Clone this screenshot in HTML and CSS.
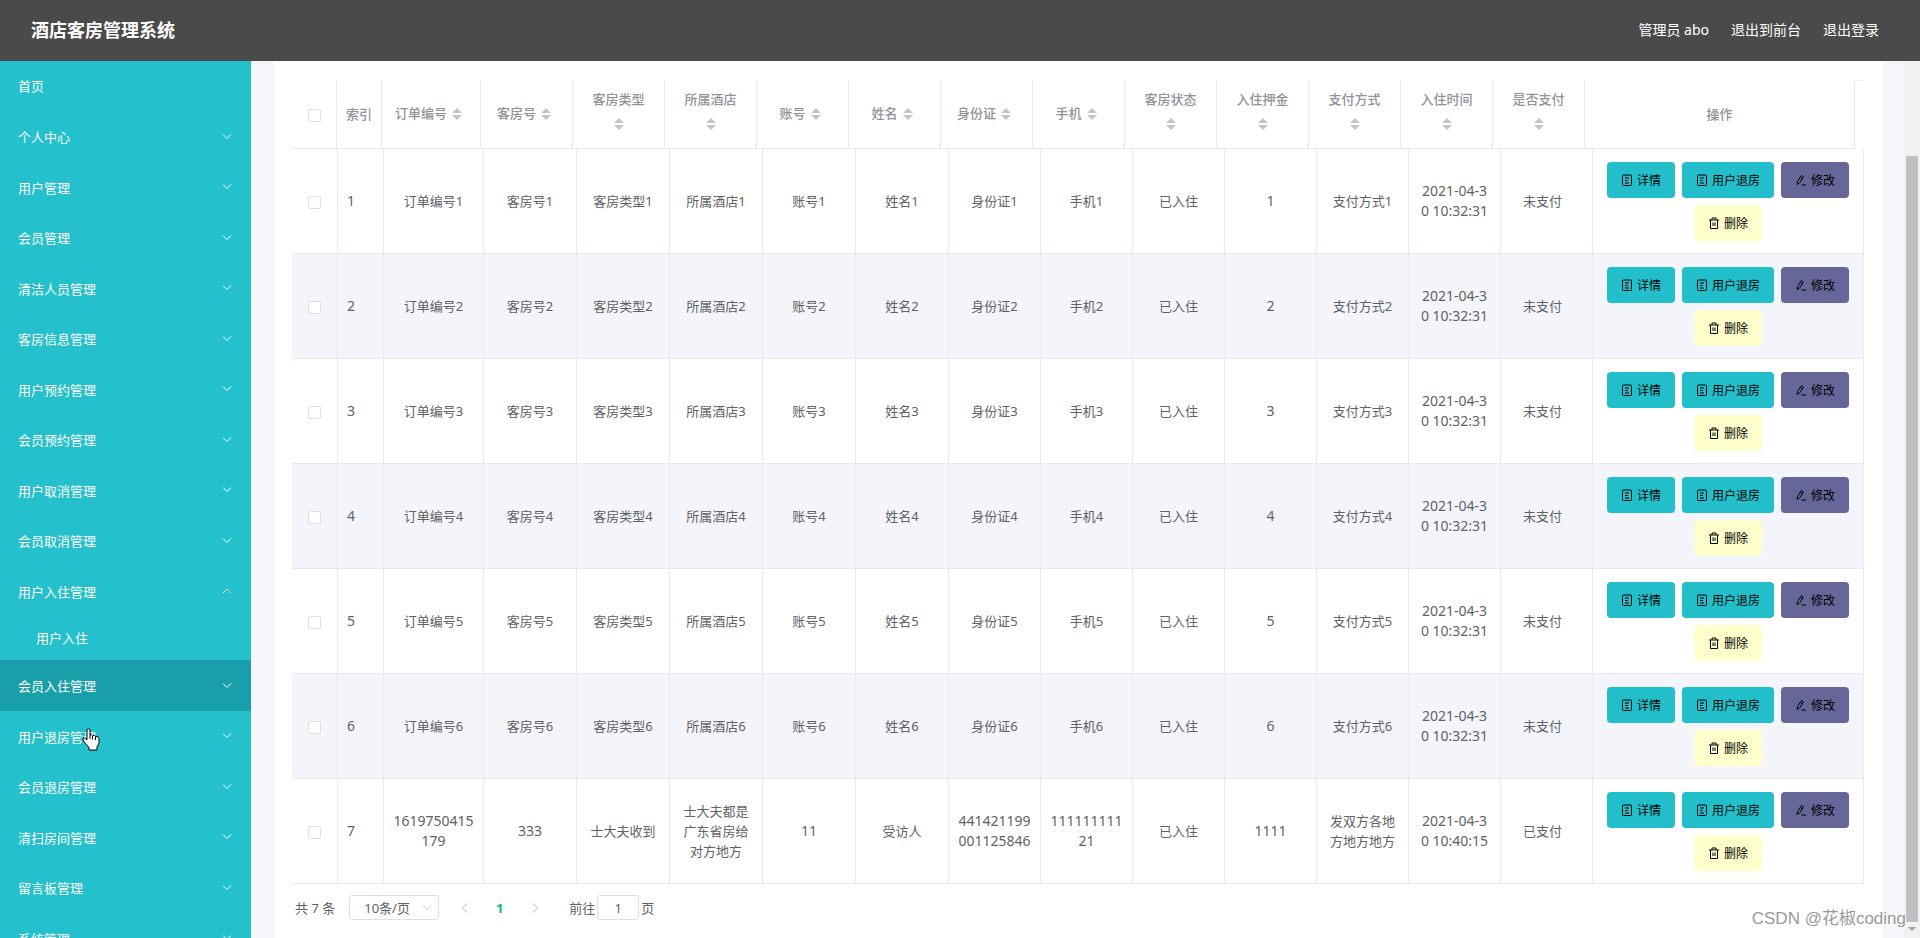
FILE: index.html
```html
<!DOCTYPE html>
<html lang="zh-CN">
<head>
  <meta charset="UTF-8">
  <meta name="viewport" content="width=device-width, initial-scale=1.0">
  <title>酒店客房管理系统</title>
  <link rel="stylesheet" href="styles.css">
</head>
<body>
  <!-- Icon symbols -->
  <svg class="symbols" aria-hidden="true">
    <symbol id="icon-down" viewBox="0 0 12 12"><path d="M2 3.5 L6 7.5 L10 3.5" /></symbol>
    <symbol id="icon-up" viewBox="0 0 12 12"><path d="M2 8 L6 4 L10 8" /></symbol>
    <symbol id="icon-left" viewBox="0 0 12 12"><path d="M8 1.5 L3.5 6 L8 10.5" /></symbol>
    <symbol id="icon-right" viewBox="0 0 12 12"><path d="M4 1.5 L8.500 6 L4 10.5" /></symbol>
    <symbol id="icon-tickets" viewBox="0 0 12 12"><rect x="1.5" y="1" width="9" height="10.5" rx="1" /><path d="M4 4h4M4 6.500h3M4 9h4" /></symbol>
    <symbol id="icon-edit" viewBox="0 0 12 12"><path d="M2 10.500 L2.500 7.500 L6.500 1.500 L8.500 3 L4.500 9 Z M5.500 3.500 L7.500 5 M6.500 11h4.500" /></symbol>
    <symbol id="icon-delete" viewBox="0 0 12 12"><path d="M1 3h10M4 3V1h4v2M2.500 3v8.500h7V3M5 5.500v3.500M7 5.500v3.500" /></symbol>
    <symbol id="icon-sort" viewBox="0 0 10 12"><path d="M0 5 L5 0 L10 5 Z M0 7 L5 12 L10 7 Z" /></symbol>
  </svg>

  <header class="navbar">
    <h1 class="navbar-title">酒店客房管理系统</h1>
    <div class="navbar-right">
      <span>管理员 abo</span>
      <a href="#">退出到前台</a>
      <a href="#">退出登录</a>
    </div>
  </header>

  <div class="container">
    <!-- Side menu -->
    <nav class="sidebar">
      <ul class="menu">
        <li><a class="menu-item" href="#"><span>首页</span></a></li>
        <li><a class="menu-item has-sub" href="#"><span>个人中心</span><svg class="arrow"><use href="#icon-down" /></svg></a></li>
        <li><a class="menu-item has-sub" href="#"><span>用户管理</span><svg class="arrow"><use href="#icon-down" /></svg></a></li>
        <li><a class="menu-item has-sub" href="#"><span>会员管理</span><svg class="arrow"><use href="#icon-down" /></svg></a></li>
        <li><a class="menu-item has-sub" href="#"><span>清洁人员管理</span><svg class="arrow"><use href="#icon-down" /></svg></a></li>
        <li><a class="menu-item has-sub" href="#"><span>客房信息管理</span><svg class="arrow"><use href="#icon-down" /></svg></a></li>
        <li><a class="menu-item has-sub" href="#"><span>用户预约管理</span><svg class="arrow"><use href="#icon-down" /></svg></a></li>
        <li><a class="menu-item has-sub" href="#"><span>会员预约管理</span><svg class="arrow"><use href="#icon-down" /></svg></a></li>
        <li><a class="menu-item has-sub" href="#"><span>用户取消管理</span><svg class="arrow"><use href="#icon-down" /></svg></a></li>
        <li><a class="menu-item has-sub" href="#"><span>会员取消管理</span><svg class="arrow"><use href="#icon-down" /></svg></a></li>
        <li>
          <a class="menu-item has-sub" href="#"><span>用户入住管理</span><svg class="arrow"><use href="#icon-up" /></svg></a>
          <a class="sub-item" href="#">用户入住</a>
        </li>
        <li><a class="menu-item has-sub active" href="#"><span>会员入住管理</span><svg class="arrow"><use href="#icon-down" /></svg></a></li>
        <li><a class="menu-item has-sub" href="#"><span>用户退房管理</span><svg class="arrow"><use href="#icon-down" /></svg></a></li>
        <li><a class="menu-item has-sub" href="#"><span>会员退房管理</span><svg class="arrow"><use href="#icon-down" /></svg></a></li>
        <li><a class="menu-item has-sub" href="#"><span>清扫房间管理</span><svg class="arrow"><use href="#icon-down" /></svg></a></li>
        <li><a class="menu-item has-sub" href="#"><span>留言板管理</span><svg class="arrow"><use href="#icon-down" /></svg></a></li>
        <li><a class="menu-item has-sub" href="#"><span>系统管理</span><svg class="arrow"><use href="#icon-down" /></svg></a></li>
      </ul>
    </nav>

    <!-- Check-in list -->
    <main class="main">
      <div class="panel">
        <div class="table-head">
          <table class="table">
            <colgroup>
              <col class="w45"><col class="w45"><col class="w99">
              <col class="w92"><col class="w92"><col class="w92"><col class="w92"><col class="w92"><col class="w92">
              <col class="w92"><col class="w92"><col class="w92"><col class="w92"><col class="w92"><col class="w92">
              <col class="w270">
            </colgroup>
            <thead>
              <tr id="head-row"></tr>
            </thead>
          </table>
        </div>
        <table class="table table-body">
          <colgroup>
            <col class="w46"><col class="w46"><col class="w100">
            <col class="w93"><col class="w93"><col class="w93"><col class="w93"><col class="w93"><col class="w92">
            <col class="w92"><col class="w92"><col class="w92"><col class="w92"><col class="w92"><col class="w92">
            <col class="w271">
          </colgroup>
          <tbody id="body-rows"></tbody>
        </table>

        <div class="pagination">
          <span>共 7 条</span>
          <span class="page-size">
            <select aria-label="每页条数">
              <option>10条/页</option>
              <option>20条/页</option>
            </select>
            <svg class="select-arrow"><use href="#icon-down" /></svg>
          </span>
          <button class="page-btn" type="button" aria-label="上一页"><svg><use href="#icon-left" /></svg></button>
          <button class="page-btn current" type="button">1</button>
          <button class="page-btn" type="button" aria-label="下一页"><svg><use href="#icon-right" /></svg></button>
          <label class="jump">前往<input type="text" value="1">页</label>
        </div>
      </div>
    </main>

    <div class="scrollbar">
      <div class="scrollbar-thumb"></div>
      <div class="scrollbar-down"></div>
    </div>
  </div>

  <div class="watermark">CSDN @花椒coding</div>
  <svg class="pointer" viewBox="0 0 18 23" aria-hidden="true">
    <path d="M5 1.500 Q6.500 0 8 1.500 V7 Q9.500 6 10.500 7.500 Q12.500 6.500 13.500 8.500 Q16.500 8 17 10.500 V15 L15 19 V22 H7 V19.500 L3 15 L1 12 Q0.500 10 2.500 10 L5 12 Z" />
    <path class="pointer-line" d="M8 7 V11 M10.500 8 V11.500 M13.500 9 V12" />
  </svg>

  <script src="script.js"></script>
</body>
</html>
```

FILE: styles.css
```css
* {
  box-sizing: border-box;
}

body {
  margin: 0;
  height: 100vh;
  display: flex;
  flex-direction: column;
  overflow: hidden;
  font-family: "Noto Sans", "Noto Sans CJK SC", sans-serif;
  font-size: 13px;
  line-height: 20px;
  color: #606266;
  background-color: #f4f6fb;
}

a {
  color: inherit;
  text-decoration: none;
}

button,
input,
select {
  font-family: inherit;
  font-size: inherit;
  color: inherit;
}

svg {
  fill: none;
  stroke: currentColor;
}

.symbols {
  position: absolute;
  width: 0;
  height: 0;
}

/* Top bar */
.navbar {
  flex: none;
  height: 61px;
  padding: 0 41px 2px 31px;
  display: flex;
  align-items: center;
  justify-content: space-between;
  background-color: #4a4a4a;
  color: #fff;
}

.navbar-title {
  margin: 0;
  font-size: 18px;
  font-weight: bold;
}

.navbar-right {
  display: flex;
  gap: 22px;
  font-size: 14px;
}

.container {
  flex: 1;
  min-height: 0;
  display: flex;
}

/* Side menu */
.sidebar {
  flex: none;
  width: 251px;
  overflow: hidden;
  background-color: #24c0cc;
  color: #fff;
}

.menu {
  margin: 0;
  padding: 0;
  list-style: none;
}

.menu-item {
  height: 50px;
  padding: 0 18px;
  display: flex;
  align-items: center;
  justify-content: space-between;
}

.menu li:nth-child(even) .menu-item {
  height: 51px;
}

.has-sub span {
  padding-top: 1px;
}

.menu-item.active {
  background-color: #189faa;
}

.arrow {
  width: 12px;
  height: 12px;
}

.sub-item {
  display: block;
  padding-left: 36px;
  line-height: 44px;
}

/* Content */
.main {
  flex: 1;
  min-width: 0;
  padding: 0 22px 0 23px;
}

.panel {
  height: 100%;
  padding: 19px 18px;
  background-color: #fff;
}

.table {
  width: 100%;
  table-layout: fixed;
  border-collapse: separate;
  border-spacing: 0;
}

.table-head {
  padding-right: 9px;
  background: linear-gradient(#ebeef5, #ebeef5) right top / 9px 1px no-repeat;
}

.w45 { width: 45px; }
.w46 { width: 46px; }
.w92 { width: 92px; }
.w93 { width: 93px; }
.w99 { width: 99px; }
.w100 { width: 100px; }
.w270 { width: 270px; }
.w271 { width: 271px; }

.table th,
.table td {
  padding: 0 9px;
  border-right: 1px solid #e6e9f2;
  border-bottom: 1px solid #e6e9f2;
  text-align: center;
  word-break: break-all;
}

.table th {
  height: 69px;
  font-weight: 500;
  color: #909399;
}

.table th.sortable {
  padding: 0 10px;
}

.table td {
  height: 105px;
}

.table tbody tr:nth-child(even) {
  background-color: #f3f5fa;
}

.table td.index {
  padding-left: 9px;
  text-align: left;
}

.table td.pay {
  padding-right: 17px;
}

.table .num {
  font-size: 14px;
}

.sort {
  display: inline-flex;
  width: 20px;
  height: 30px;
  align-items: center;
  justify-content: center;
  vertical-align: middle;
}

.sort svg {
  width: 10px;
  height: 12px;
  fill: #c0c4cc;
  stroke: none;
}

.checkbox {
  appearance: none;
  display: block;
  width: 13px;
  height: 13px;
  margin: 2px auto 0;
  border: 1px solid #dcdfe6;
  border-radius: 2px;
  background-color: #fff;
}

/* Row buttons */
.actions {
  display: flex;
  flex-wrap: wrap;
  justify-content: center;
  gap: 7px;
}

.btn {
  height: 36px;
  padding: 0 14px;
  display: flex;
  align-items: center;
  gap: 4px;
  border: none;
  border-radius: 4px;
  font-size: 12px;
  color: #000;
  cursor: pointer;
}

.btn svg {
  width: 12px;
  height: 12px;
}

.btn-info {
  background-color: #22bfcb;
}

.btn-edit {
  background-color: #666699;
}

.btn-delete {
  background-color: #ffffcc;
}

/* Pagination */
.pagination {
  display: flex;
  align-items: center;
  padding: 11px 3px;
}

.page-size {
  position: relative;
  margin: 0 8px 0 14px;
}

.page-size select {
  appearance: none;
  display: block;
  width: 90px;
  height: 25px;
  padding: 0 14px;
  border: 1px solid #dcdfe6;
  border-radius: 3px;
  background-color: #fff;
}

.select-arrow {
  position: absolute;
  top: 7px;
  right: 6px;
  width: 12px;
  height: 12px;
  color: #c0c4cc;
}

.page-btn {
  width: 35px;
  height: 25px;
  padding: 0;
  border: none;
  background: none;
  color: #b0b3ba;
}

.page-btn svg {
  display: block;
  width: 12px;
  height: 12px;
  margin: auto;
}

.page-btn.current {
  color: #00b894;
  font-weight: bold;
}

.jump {
  display: flex;
  align-items: center;
  gap: 2px;
  margin-left: 17px;
}

.jump input {
  width: 42px;
  height: 25px;
  padding: 0;
  border: 1px solid #dcdfe6;
  border-radius: 3px;
  text-align: center;
}

/* Page scrollbar */
.scrollbar {
  flex: none;
  width: 16px;
  padding-top: 95px;
  display: flex;
  flex-direction: column;
  align-items: center;
  background-color: #f1f1f1;
}

.scrollbar-thumb {
  flex: 1;
  width: 12px;
  background-color: #c1c1c1;
}

.scrollbar-down {
  margin: 5px 0 7px;
  border: 4px solid transparent;
  border-top-color: #a0a0a0;
  border-bottom: none;
}

.watermark {
  position: absolute;
  right: 14px;
  bottom: 8px;
  font-family: "Liberation Sans", "Noto Sans CJK SC", sans-serif;
  font-size: 17px;
  line-height: 22px;
  color: #999;
  text-shadow: 1px 1px 0 #fff;
}

.pointer {
  position: absolute;
  left: 82px;
  top: 728px;
  width: 18px;
  height: 23px;
  fill: #fff;
  stroke: #000;
}
```

FILE: script.js
```javascript
// Table headers, sortable ones get the caret icon
const headers = ['订单编号', '客房号', '客房类型', '所属酒店', '账号', '姓名', '身份证', '手机', '客房状态', '入住押金', '支付方式', '入住时间', '是否支付'];

const rows = [];
for (let i = 1; i <= 6; i++) {
  rows.push(['订单编号' + i, '客房号' + i, '客房类型' + i, '所属酒店' + i, '账号' + i, '姓名' + i, '身份证' + i, '手机' + i, '已入住', String(i), '支付方式' + i, '2021-04-30 10:32:31', '未支付']);
}
rows.push(['1619750415179', '333', '士大夫收到', '士大夫都是广东省房给对方地方', '11', '受访人', '441421199001125846', '11111111121', '已入住', '1111', '发双方各地方地方地方', '2021-04-30 10:40:15', '已支付']);

function icon(name) {
  return `<svg aria-hidden="true"><use href="#icon-${name}" /></svg>`;
}

const actions = `
  <div class="actions">
    <button class="btn btn-info" type="button">${icon('tickets')}详情</button>
    <button class="btn btn-info" type="button">${icon('tickets')}用户退房</button>
    <button class="btn btn-edit" type="button">${icon('edit')}修改</button>
    <button class="btn btn-delete" type="button">${icon('delete')}删除</button>
  </div>`;

document.getElementById('head-row').innerHTML =
  '<th><input class="checkbox" type="checkbox" aria-label="全选"></th><th>索引</th>' +
  headers.map(h => `<th class="sortable">${h}<span class="sort">${icon('sort')}</span></th>`).join('') +
  '<th>操作</th>';

document.getElementById('body-rows').innerHTML = rows.map((row, i) => {
  const cells = row.map((value, col) => {
    let cls = /^[\d\s:-]+$/.test(value) ? 'num' : 'text';
    if (col === row.length - 1) {
      cls = 'pay';
    }
    return `<td class="${cls}">${value}</td>`;
  }).join('');
  return `<tr>
    <td><input class="checkbox" type="checkbox" aria-label="选择第${i + 1}行"></td>
    <td class="index num">${i + 1}</td>
    ${cells}
    <td>${actions}</td>
  </tr>`;
}).join('');
```
